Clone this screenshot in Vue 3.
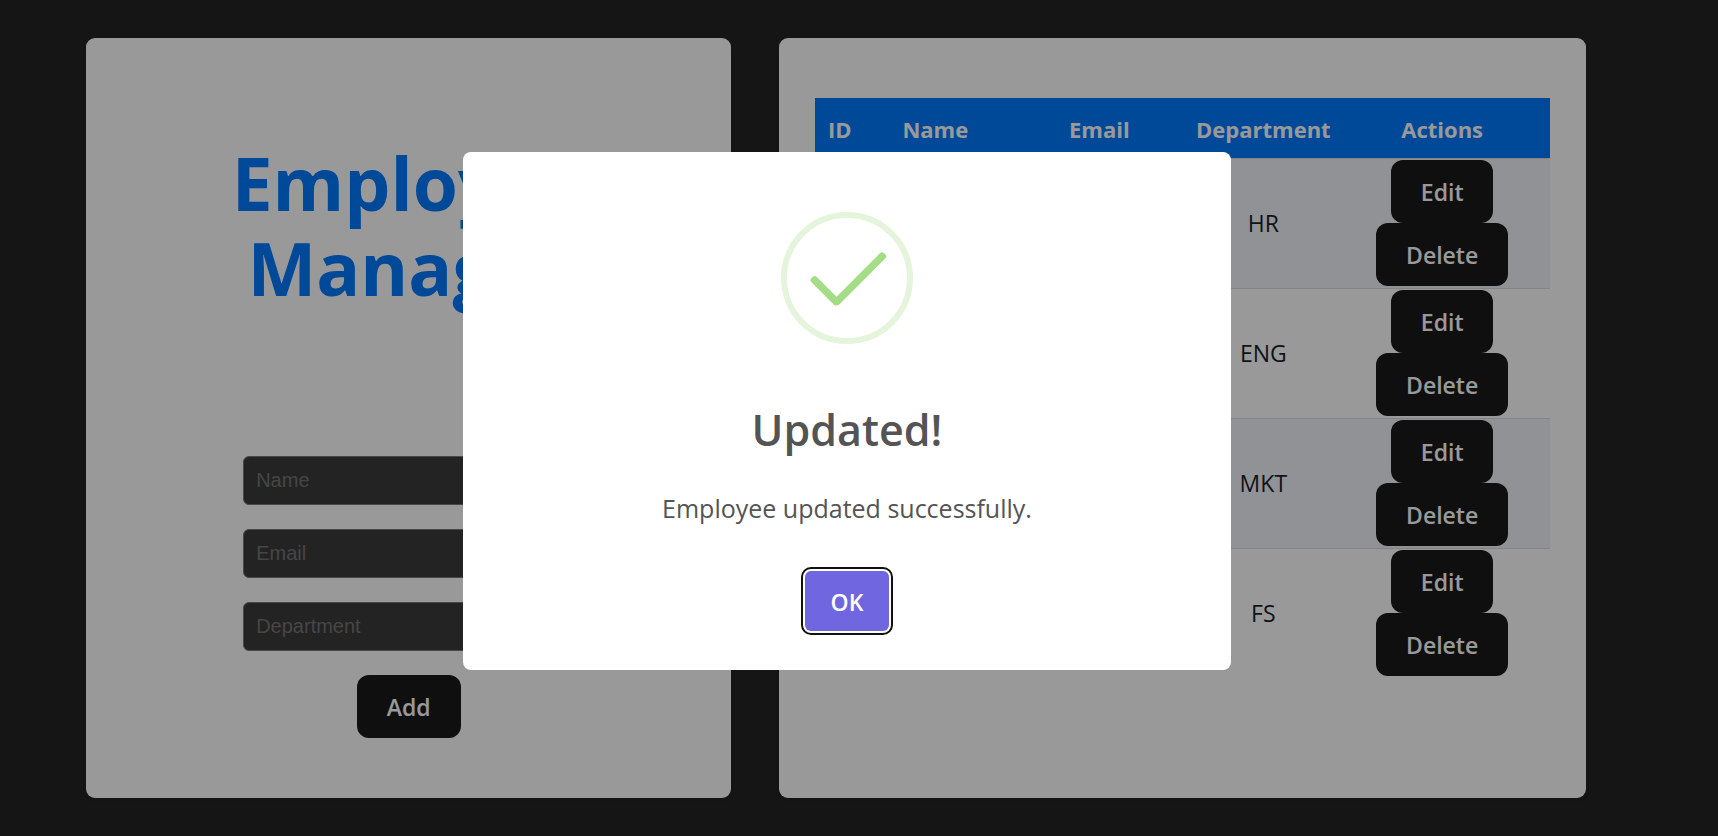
<script setup>
import { ref } from 'vue'

const fields = [
  { id: 'name', label: 'Name' },
  { id: 'email', label: 'Email' },
  { id: 'department', label: 'Department' },
]
const form = ref({ name: '', email: '', department: '' })

const employees = ref([
  { id: '', name: '', email: '', department: 'HR' },
  { id: '', name: '', email: '', department: 'ENG' },
  { id: '', name: '', email: '', department: 'MKT' },
  { id: '', name: '', email: '', department: 'FS' },
])

const open = ref(true)
</script>

<template>
  <div class="page">
    <main class="cards">
      <section class="card form-card">
        <h1 class="title">Employee Manager</h1>
        <form class="form" @submit.prevent>
          <input
            v-for="f in fields"
            :id="f.id"
            :key="f.id"
            v-model="form[f.id]"
            class="field"
            type="text"
            :placeholder="f.label"
            :aria-label="f.label"
          />
          <button class="btn" type="submit">Add</button>
        </form>
      </section>

      <section class="card list-card">
        <table class="table">
          <colgroup>
            <col class="c-id" />
            <col class="c-name" />
            <col class="c-email" />
            <col class="c-dept" />
            <col class="c-actions" />
          </colgroup>
          <thead>
            <tr>
              <th>ID</th>
              <th>Name</th>
              <th>Email</th>
              <th>Department</th>
              <th>Actions</th>
            </tr>
          </thead>
          <tbody>
            <tr v-for="e in employees" :key="e.department">
              <td>{{ e.id }}</td>
              <td>{{ e.name }}</td>
              <td>{{ e.email }}</td>
              <td>{{ e.department }}</td>
              <td>
                <div class="actions">
                  <button class="btn" type="button">Edit</button>
                  <button class="btn" type="button">Delete</button>
                </div>
              </td>
            </tr>
          </tbody>
        </table>
      </section>
    </main>

    <div v-if="open" class="backdrop">
      <div class="modal" role="dialog" aria-modal="true" aria-labelledby="modal-title">
        <svg class="icon" viewBox="0 0 132 132" aria-hidden="true">
          <circle cx="66" cy="66" r="63" fill="none" stroke="#e4f5db" stroke-width="6" />
          <g fill="#a5dc86">
            <rect x="25.5" y="75" width="37.5" height="7.5" rx="3" transform="rotate(45 44.25 78.75)" />
            <rect x="43.5" y="63" width="70.5" height="7.5" rx="3" transform="rotate(-45 78.75 66.75)" />
          </g>
        </svg>
        <h2 id="modal-title" class="modal-title">Updated!</h2>
        <p class="modal-text">Employee updated successfully.</p>
        <button class="ok" type="button" @click="open = false">OK</button>
      </div>
    </div>
  </div>
</template>

<style>
body {
  margin: 0;
  background: #242424;
}
</style>

<style scoped>
.page {
  box-sizing: border-box;
  min-height: 100vh;
  padding: 38px 132px 38px 86px;
  display: flex;
  background: #242424;
  color: #1a1f2a;
  font-family: "Segoe UI", "Open Sans", "Noto Sans", sans-serif;
  font-size: 23px;
  line-height: 36px;
}

.cards {
  flex: 1;
  display: grid;
  grid-template-columns: minmax(0, 4fr) minmax(0, 5fr);
  gap: 48px;
}

.card {
  box-sizing: border-box;
  background: #fff;
  border-radius: 9px;
  box-shadow: 0 3px 12px rgba(0, 0, 0, 0.1);
}

.form-card {
  display: flex;
  flex-direction: column;
  align-items: center;
  padding: 102px 60px 60px;
}

.title {
  margin: 0 0 146px;
  max-width: 400px;
  color: #007bff;
  font-size: 73px;
  font-weight: 700;
  line-height: 85px;
  text-align: center;
}

.form {
  display: flex;
  flex-direction: column;
  align-items: center;
  gap: 24px;
}

.field {
  box-sizing: border-box;
  width: 331px;
  height: 49px;
  padding: 0 12px;
  border: 1px solid #75787c;
  border-radius: 6px;
  background: #3b3b3b;
  color: #fff;
  font-family: "Liberation Sans", Arial, sans-serif;
  font-size: 20px;
}

.field::placeholder {
  color: #757575;
}

.btn {
  padding: 14px 30px 13px;
  border: 0;
  border-radius: 12px;
  background: #1a1a1a;
  color: #fff;
  font-family: inherit;
  font-size: 23px;
  font-weight: 600;
  line-height: 36px;
}

.list-card {
  padding: 60px 36px;
}

.table {
  width: 100%;
  table-layout: fixed;
  border-collapse: collapse;
  text-align: center;
}

.c-id {
  width: 49px;
}

.c-name,
.c-dept {
  width: 142px;
}

.c-email {
  width: 186px;
}

.table th {
  padding: 13px 0 11px;
  background: #007bff;
  color: #fff;
  font-size: 22px;
  font-weight: 700;
}

.table td {
  padding: 1px 0 2px;
  border-top: 1px solid #ddd;
}

.table tbody tr:nth-child(odd) {
  background: #f2f3f9;
}

.actions {
  display: flex;
  flex-direction: column;
  align-items: center;
}

.backdrop {
  position: fixed;
  inset: 0;
  display: flex;
  align-items: center;
  justify-content: center;
  padding: 0 24px 14px 0;
  background: rgba(0, 0, 0, 0.4);
}

.modal {
  box-sizing: border-box;
  width: 768px;
  max-width: 100%;
  padding: 60px 24px 39px;
  display: flex;
  flex-direction: column;
  align-items: center;
  border-radius: 8px;
  background: #fff;
  color: #545454;
}

.icon {
  width: 132px;
  height: 132px;
}

.modal-title {
  margin: 52px 0 0;
  font-size: 43px;
  font-weight: 600;
  line-height: 68px;
}

.modal-text {
  margin: 24px 0 0;
  font-size: 25px;
  line-height: 41px;
}

.ok {
  margin-top: 42px;
  padding: 13px 26px 11px;
  border: 0;
  border-radius: 6px;
  background: #7066e0;
  color: #fff;
  font-family: inherit;
  font-size: 23px;
  font-weight: 600;
  line-height: 36px;
  outline: 2px solid #101010;
  outline-offset: 2px;
}
</style>
